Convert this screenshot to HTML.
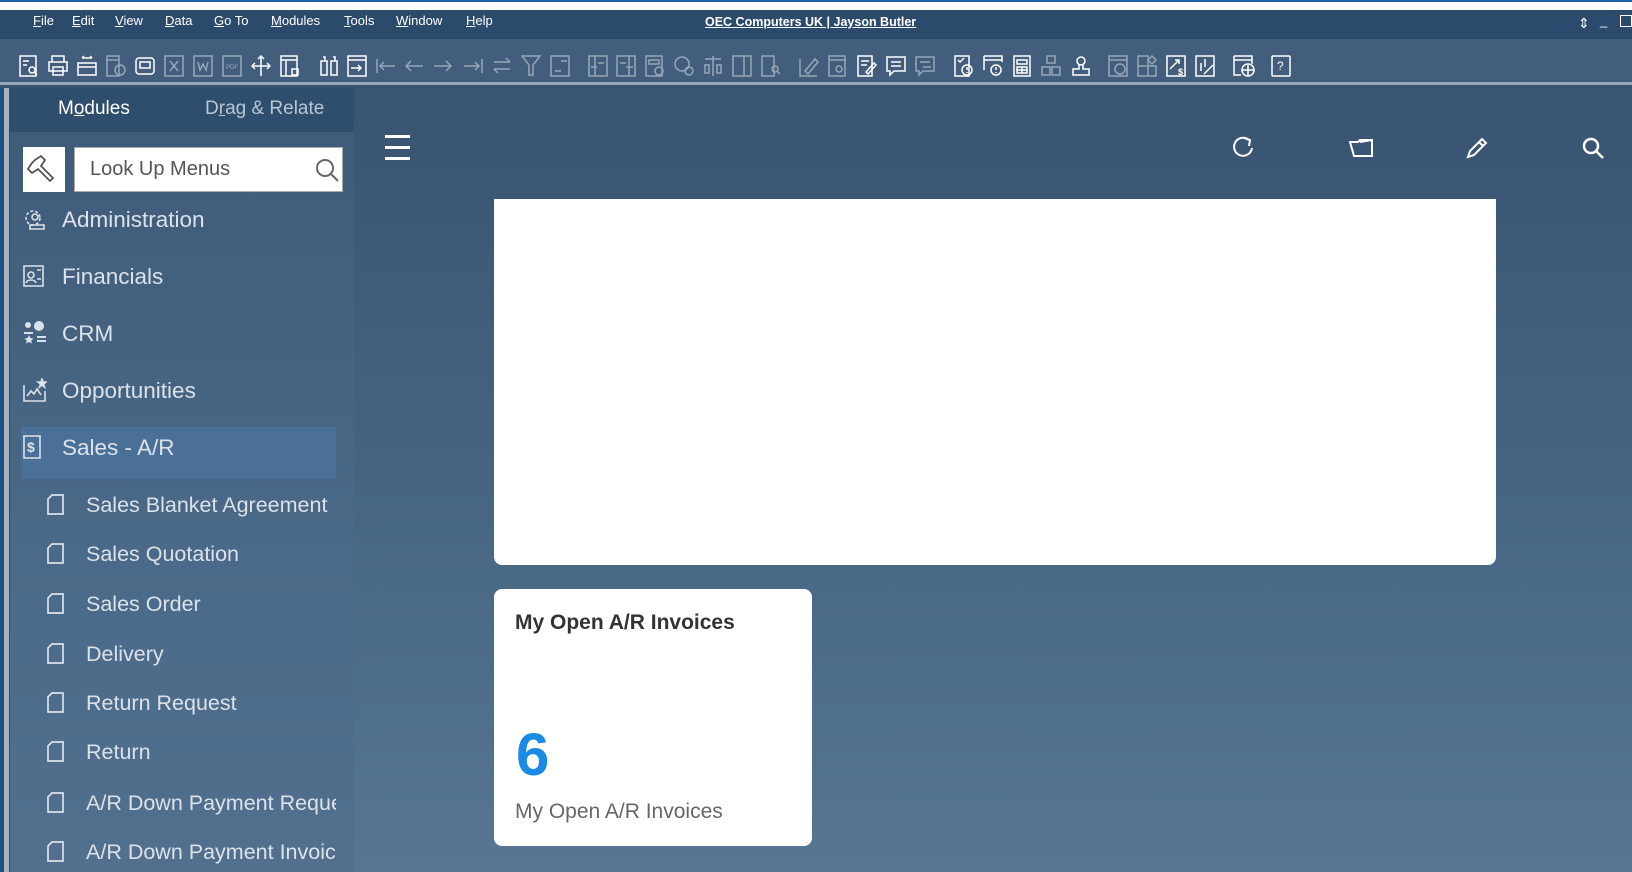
<!DOCTYPE html>
<html><head><meta charset="utf-8">
<style>
*{margin:0;padding:0;box-sizing:border-box}
body{width:1632px;height:872px;overflow:hidden;position:relative;font-family:"Liberation Sans",sans-serif;background:linear-gradient(#37536f 0px,#3a5673 150px,#4b6a88 600px,#587694 872px)}
.abs{position:absolute}
#top{left:0;top:0;width:1632px;height:10px;background:#fff;border-top:2px solid #1f5fa6}
#menu{left:0;top:10px;width:1632px;height:29px;background:#2c4a6b;color:#fff;font-size:13px}
#menu span{position:absolute;top:3px}
#tb{left:0;top:39px;width:1632px;height:46px;background:#425e7c;border-bottom:3px solid #93a8bd}
#tb svg{position:absolute;top:16px}
#side{left:10px;top:88px;width:344px;height:784px;background:linear-gradient(#3e5a78,#4b6988 60%,#52708e)}
#lstripe{left:0;top:88px;width:10px;height:784px;background:#1e4f86}
#lstripe2{left:4px;top:88px;width:5px;height:784px;background:#a9b3bd}
#tabs{left:10px;top:88px;width:344px;height:44px;background:#2f4d6d;font-size:19px}
.it{position:absolute;left:62px;color:#dbe2ea;font-size:22.5px;white-space:nowrap}
.sub{position:absolute;left:86px;color:#dbe2ea;font-size:21.5px;white-space:nowrap;width:250px;overflow:hidden}
.doc{position:absolute;left:47px;width:17px;height:21px}
.card{background:#fff;border-radius:8px}
</style></head><body>
<div id="top" class="abs"></div>
<div id="menu" class="abs">
<span style="left:33px"><u>F</u>ile</span><span style="left:72px"><u>E</u>dit</span><span style="left:115px"><u>V</u>iew</span><span style="left:165px"><u>D</u>ata</span><span style="left:214px"><u>G</u>o To</span><span style="left:271px"><u>M</u>odules</span><span style="left:344px"><u>T</u>ools</span><span style="left:396px"><u>W</u>indow</span><span style="left:466px"><u>H</u>elp</span>
<span style="left:705px;top:5px;text-decoration:underline;font-weight:bold;font-size:12.5px">OEC Computers UK | Jayson Butler</span>
<span style="left:1578px;top:5px;font-size:14px">⇕</span><span style="left:1600px;top:3px">_</span><span style="left:1620px;top:5px;width:12px;height:12px;border:1.5px solid #fff"></span>
</div>
<div id="tb" class="abs">
<svg style="left:19px" width="20" height="22" fill="none" stroke="#fff" stroke-width="1.5"><path d="M1 1h16v20H1zM4 6h6M4 10h4"/><circle cx="13" cy="15" r="3"/><path d="M15 17l3 3"/></svg>
<svg style="left:48px" width="20" height="22" fill="none" stroke="#fff" stroke-width="1.5"><path d="M4 1h12v6H4zM1 7h18v9H1zM5 12h10v8H5z"/></svg>
<svg style="left:77px" width="20" height="22" fill="none" stroke="#fff" stroke-width="1.5"><path d="M1 8h18v12H1zM1 12h18M5 3h10M5 3l2-2M15 3l-2-2"/></svg>
<svg style="left:106px;opacity:.45" width="20" height="22" fill="none" stroke="#fff" stroke-width="1.5"><path d="M1 1h12v20H1zM1 5h12"/><circle cx="14" cy="15" r="5"/></svg>
<svg style="left:135px" width="20" height="22" fill="none" stroke="#fff" stroke-width="1.5"><rect x="1" y="3" width="18" height="16" rx="3"/><path d="M5 7h10v6H5z"/></svg>
<svg style="left:164px;opacity:.45" width="20" height="22" fill="none" stroke="#fff" stroke-width="1.5"><path d="M1 1h18v20H1zM6 6l8 10M14 6l-8 10"/></svg>
<svg style="left:193px;opacity:.45" width="20" height="22" fill="none" stroke="#fff" stroke-width="1.5"><path d="M1 1h18v20H1zM5 7l2 8 3-6 3 6 2-8"/></svg>
<svg style="left:222px;opacity:.45" width="20" height="22" fill="none" stroke="#fff" stroke-width="1.5"><path d="M1 1h18v20H1z"/><text x="4" y="14" font-size="6" fill="#fff" stroke="none">PDF</text></svg>
<svg style="left:251px" width="20" height="22" fill="none" stroke="#fff" stroke-width="1.5"><path d="M10 1v20M1 11h18M7 4l3-3 3 3M4 8l-3 3 3 3M16 8l3 3-3 3"/></svg>
<svg style="left:280px" width="20" height="22" fill="none" stroke="#fff" stroke-width="1.5"><path d="M1 1h16v20H1zM1 5h16M6 5v16M12 14h6v6h-6z"/></svg>
<svg style="left:319px" width="20" height="22" fill="none" stroke="#fff" stroke-width="1.5"><path d="M2 6h6v14H2zM12 6h6v14h-6zM4 2h2v4M14 2h2v4"/></svg>
<svg style="left:347px" width="20" height="22" fill="none" stroke="#fff" stroke-width="1.5"><path d="M1 1h18v20H1zM1 5h18M4 13h10M11 10l3 3-3 3"/></svg>
<svg style="left:376px;opacity:.45" width="20" height="22" fill="none" stroke="#fff" stroke-width="1.5"><path d="M1 4v14M4 11h15M8 7l-4 4 4 4"/></svg>
<svg style="left:404px;opacity:.45" width="20" height="22" fill="none" stroke="#fff" stroke-width="1.5"><path d="M2 11h17M7 6l-5 5 5 5"/></svg>
<svg style="left:433px;opacity:.45" width="20" height="22" fill="none" stroke="#fff" stroke-width="1.5"><path d="M1 11h17M13 6l5 5-5 5"/></svg>
<svg style="left:463px;opacity:.45" width="20" height="22" fill="none" stroke="#fff" stroke-width="1.5"><path d="M19 4v14M1 11h15M12 7l4 4-4 4"/></svg>
<svg style="left:492px;opacity:.45" width="20" height="22" fill="none" stroke="#fff" stroke-width="1.5"><path d="M2 7h16M14 3l4 4M18 14H2M6 18l-4-4"/></svg>
<svg style="left:521px;opacity:.45" width="20" height="22" fill="none" stroke="#fff" stroke-width="1.5"><path d="M1 1h18L12 10v10H8V10z"/></svg>
<svg style="left:550px;opacity:.45" width="20" height="22" fill="none" stroke="#fff" stroke-width="1.5"><path d="M1 1h18v20H1zM11 6h6M5 16h6"/></svg>
<svg style="left:588px;opacity:.45" width="20" height="22" fill="none" stroke="#fff" stroke-width="1.5"><path d="M1 1h18v20H1zM7 1v20M10 8h6M3 12h6"/></svg>
<svg style="left:616px;opacity:.45" width="20" height="22" fill="none" stroke="#fff" stroke-width="1.5"><path d="M1 1h18v20H1zM13 1v20M4 8h6M10 12h7"/></svg>
<svg style="left:645px;opacity:.45" width="20" height="22" fill="none" stroke="#fff" stroke-width="1.5"><path d="M1 1h16v20H1zM4 5h10v4H4z"/><circle cx="14" cy="16" r="4"/></svg>
<svg style="left:674px;opacity:.45" width="20" height="22" fill="none" stroke="#fff" stroke-width="1.5"><circle cx="8" cy="9" r="7"/><circle cx="15" cy="16" r="4"/></svg>
<svg style="left:703px;opacity:.45" width="20" height="22" fill="none" stroke="#fff" stroke-width="1.5"><path d="M10 1v20M2 4h16M2 10h4v8H2zM14 10h4v8h-4z"/></svg>
<svg style="left:732px;opacity:.45" width="20" height="22" fill="none" stroke="#fff" stroke-width="1.5"><path d="M1 1h18v20H1zM12 1v20"/></svg>
<svg style="left:761px;opacity:.45" width="20" height="22" fill="none" stroke="#fff" stroke-width="1.5"><path d="M1 1h12v20H1z"/><circle cx="14" cy="14" r="3"/><path d="M16 16l3 3"/></svg>
<svg style="left:799px;opacity:.45" width="20" height="22" fill="none" stroke="#fff" stroke-width="1.5"><path d="M1 4v17h17M6 16l10-12 3 3L9 19z"/></svg>
<svg style="left:828px;opacity:.45" width="20" height="22" fill="none" stroke="#fff" stroke-width="1.5"><path d="M1 1h16v20H1zM1 5h16"/><circle cx="11" cy="14" r="3"/></svg>
<svg style="left:857px" width="20" height="22" fill="none" stroke="#fff" stroke-width="1.5"><path d="M1 1h14v20H1zM4 6h8M4 10h6M9 17l8-9 2 2-8 9z"/></svg>
<svg style="left:886px" width="20" height="22" fill="none" stroke="#fff" stroke-width="1.5"><path d="M1 2h18v14H8l-4 4v-4H1zM5 7h10M5 11h10"/></svg>
<svg style="left:915px;opacity:.45" width="20" height="22" fill="none" stroke="#fff" stroke-width="1.5"><path d="M1 2h18v14H8l-4 4v-4H1zM5 7h10M8 12h8"/></svg>
<svg style="left:954px" width="20" height="22" fill="none" stroke="#fff" stroke-width="1.5"><path d="M1 1h14v20H1zM4 5l2 2 4-4"/><circle cx="13" cy="15" r="5"/><path d="M13 12v3M13 17v1"/></svg>
<svg style="left:983px" width="20" height="22" fill="none" stroke="#fff" stroke-width="1.5"><path d="M1 1h18v6M1 1v14M1 5h18"/><circle cx="13" cy="15" r="5"/><path d="M13 12v3M13 17v1"/></svg>
<svg style="left:1012px" width="20" height="22" fill="none" stroke="#fff" stroke-width="1.5"><path d="M2 1h16v20H2zM5 5h10v4H5zM5 12h10v6H5zM10 12v6M5 15h10"/></svg>
<svg style="left:1041px;opacity:.45" width="20" height="22" fill="none" stroke="#fff" stroke-width="1.5"><path d="M6 1h8v7H6zM1 12h8v8H1zM11 12h8v8h-8z"/></svg>
<svg style="left:1071px" width="20" height="22" fill="none" stroke="#fff" stroke-width="1.5"><circle cx="10" cy="6" r="4"/><path d="M8 10v4H2v6h16v-6h-6v-4"/></svg>
<svg style="left:1108px;opacity:.45" width="20" height="22" fill="none" stroke="#fff" stroke-width="1.5"><path d="M1 1h18v20H1zM1 5h18"/><circle cx="12" cy="14" r="5"/></svg>
<svg style="left:1137px;opacity:.45" width="20" height="22" fill="none" stroke="#fff" stroke-width="1.5"><path d="M1 1h10v20H1zM1 11h18v10h-8M15 1l4 4-4 4-4-4z"/></svg>
<svg style="left:1166px" width="20" height="22" fill="none" stroke="#fff" stroke-width="1.5"><path d="M1 1h18v20H1zM4 14l9-9M9 5h4v4"/><text x="12" y="20" font-size="9" fill="#fff" stroke="none" font-weight="bold">$</text></svg>
<svg style="left:1195px" width="20" height="22" fill="none" stroke="#fff" stroke-width="1.5"><path d="M1 1h18v20H1zM6 8v8M10 4v8M9 19l9-9"/></svg>
<svg style="left:1233px" width="22" height="22" fill="none" stroke="#fff" stroke-width="1.5"><path d="M1 1h18v8M1 1v19h7M1 5h18"/><circle cx="15" cy="15" r="6"/><path d="M9 15h12M15 9v12"/></svg>
<svg style="left:1271px" width="20" height="22" fill="none" stroke="#fff" stroke-width="1.5"><rect x="1" y="1" width="18" height="20" rx="1"/><text x="6" y="15" font-size="12" fill="#fff" stroke="none">?</text></svg>
</div>
<div id="lstripe" class="abs"></div><div id="lstripe2" class="abs"></div>
<div id="side" class="abs">
<div class="abs" style="left:11px;top:339px;width:315px;height:52px;background:#4a7098"></div>
</div>
<div id="tabs" class="abs">
<span class="abs" style="left:48px;top:10px;color:#fff">M<u>o</u>dules</span>
<span class="abs" style="left:195px;top:10px;color:#b9c6d4">D<u>r</u>ag &amp; Relate</span>
</div>
<div class="abs" style="left:23px;top:147px;width:42px;height:45px;background:#fff">
<svg width="42" height="45" fill="none" stroke="#555" stroke-width="1.8"><path d="M12 13l6 -4 4 4-4 6 12 12-3 3-12-12-6 4-4-4 4-6z"/></svg></div>
<div class="abs" style="left:74px;top:147px;width:269px;height:45px;background:#fff;border:1px solid #aaa">
<span class="abs" style="left:15px;top:10px;font-size:20px;color:#555">Look Up Menus</span>
<svg class="abs" style="left:240px;top:10px" width="26" height="26" fill="none" stroke="#666" stroke-width="2"><circle cx="10" cy="10" r="8"/><path d="M16 16l7 7"/></svg>
</div>
<svg class="abs" style="left:23px;top:207px" width="24" height="24" fill="none" stroke="#dbe2ea" stroke-width="1.6"><circle cx="10" cy="11" r="7" stroke-dasharray="3 2"/><circle cx="12" cy="10" r="3"/><path d="M7 22v-4h14v4z"/></svg>
<span class="it" style="top:207px">Administration</span>
<svg class="abs" style="left:23px;top:264px" width="22" height="24" fill="none" stroke="#dbe2ea" stroke-width="1.6"><path d="M1 2h19v20H1z"/><circle cx="8" cy="11" r="3"/><path d="M3 19c1-4 9-4 10 0M14 6h4M14 15h4"/></svg>
<span class="it" style="top:264px">Financials</span>
<svg class="abs" style="left:23px;top:321px" width="24" height="24" fill="#dbe2ea"><circle cx="5" cy="4" r="3"/><circle cx="16" cy="5" r="5"/><path d="M1 11h9v2H1zM6 14l1.5 3 3 .5-2.2 2 .5 3-2.8-1.5-2.8 1.5.5-3-2.2-2 3-.5zM14 15h9v2h-9zM14 19h9v2h-9z"/></svg>
<span class="it" style="top:321px">CRM</span>
<svg class="abs" style="left:23px;top:378px" width="24" height="24" fill="none" stroke="#dbe2ea" stroke-width="1.6"><path d="M1 7v16h21v-10M4 18l4-5 3 3 3-5 4 6"/><path d="M19 1l1 3h3l-2.5 2 1 3-2.5-2-2.5 2 1-3-2.5-2h3z" fill="#dbe2ea"/></svg>
<span class="it" style="top:378px">Opportunities</span>
<svg class="abs" style="left:23px;top:435px" width="20" height="24" fill="none" stroke="#dbe2ea" stroke-width="1.6"><path d="M1 1h16v22H1z"/><text x="4" y="17" font-size="14" fill="#dbe2ea" stroke="none" font-weight="bold">$</text></svg>
<span class="it" style="top:435px">Sales - A/R</span>
<div id="subs">
<svg class="doc" style="top:494px" viewBox="0 0 17 21" fill="none" stroke="#dbe2ea" stroke-width="1.7"><path d="M5 1h11v19H1V5z"/></svg><span class="sub" style="top:493px">Sales Blanket Agreement</span>
<svg class="doc" style="top:543px" viewBox="0 0 17 21" fill="none" stroke="#dbe2ea" stroke-width="1.7"><path d="M5 1h11v19H1V5z"/></svg><span class="sub" style="top:542px">Sales Quotation</span>
<svg class="doc" style="top:593px" viewBox="0 0 17 21" fill="none" stroke="#dbe2ea" stroke-width="1.7"><path d="M5 1h11v19H1V5z"/></svg><span class="sub" style="top:592px">Sales Order</span>
<svg class="doc" style="top:643px" viewBox="0 0 17 21" fill="none" stroke="#dbe2ea" stroke-width="1.7"><path d="M5 1h11v19H1V5z"/></svg><span class="sub" style="top:642px">Delivery</span>
<svg class="doc" style="top:692px" viewBox="0 0 17 21" fill="none" stroke="#dbe2ea" stroke-width="1.7"><path d="M5 1h11v19H1V5z"/></svg><span class="sub" style="top:691px">Return Request</span>
<svg class="doc" style="top:741px" viewBox="0 0 17 21" fill="none" stroke="#dbe2ea" stroke-width="1.7"><path d="M5 1h11v19H1V5z"/></svg><span class="sub" style="top:740px">Return</span>
<svg class="doc" style="top:792px" viewBox="0 0 17 21" fill="none" stroke="#dbe2ea" stroke-width="1.7"><path d="M5 1h11v19H1V5z"/></svg><span class="sub" style="top:791px">A/R Down Payment Request</span>
<svg class="doc" style="top:841px" viewBox="0 0 17 21" fill="none" stroke="#dbe2ea" stroke-width="1.7"><path d="M5 1h11v19H1V5z"/></svg><span class="sub" style="top:840px">A/R Down Payment Invoice</span>
</div>
<div class="abs" style="left:385px;top:135px;width:25px;height:3px;background:#fff"></div>
<div class="abs" style="left:385px;top:146px;width:25px;height:3px;background:#fff"></div>
<div class="abs" style="left:385px;top:157px;width:25px;height:3px;background:#fff"></div>
<svg class="abs" style="left:1230px;top:135px" width="26" height="26" fill="none" stroke="#fff" stroke-width="2"><path d="M19 5A9 9 0 1 0 22 13"/><path d="M14 3l6 2-1 6"/></svg>
<svg class="abs" style="left:1348px;top:136px" width="28" height="24" fill="none" stroke="#fff" stroke-width="2"><path d="M2 6h8l2-2h12v16H6zM12 6l12-2"/></svg>
<svg class="abs" style="left:1464px;top:135px" width="26" height="26" fill="none" stroke="#fff" stroke-width="2"><path d="M4 22l2-6 12-12 4 4-12 12zM15 7l4 4"/></svg>
<svg class="abs" style="left:1581px;top:136px" width="26" height="26" fill="none" stroke="#fff" stroke-width="2.5"><circle cx="10" cy="10" r="7"/><path d="M15 15l7 7"/></svg>
<div class="abs card" style="left:494px;top:199px;width:1002px;height:366px;border-radius:0 0 8px 8px"></div>
<div class="abs card" style="left:494px;top:589px;width:318px;height:257px">
<div class="abs" style="left:21px;top:22px;font-size:21px;font-weight:bold;color:#333">My Open A/R Invoices</div>
<div class="abs" style="left:22px;top:131px;font-size:60px;font-weight:bold;color:#1a8ae5">6</div>
<div class="abs" style="left:21px;top:211px;font-size:21px;color:#666">My Open A/R Invoices</div>
</div>
</body></html>
